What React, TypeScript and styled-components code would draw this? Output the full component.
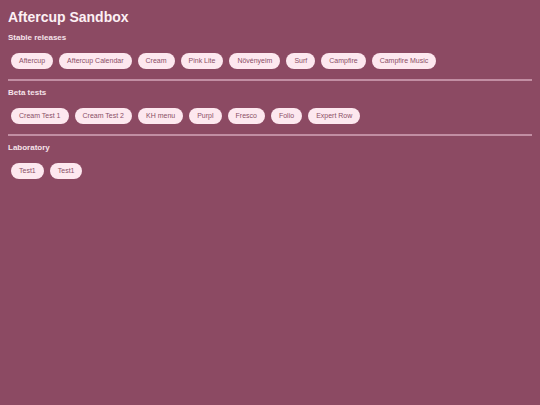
import React from "react";
import styled, { createGlobalStyle } from "styled-components";

const GlobalStyle = createGlobalStyle`
  html, body {
    margin: 0;
    padding: 0;
    background: #8c4a63;
  }
  body {
    font-family: "Liberation Sans", Arial, sans-serif;
  }
`;

const sections = [
  {
    title: "Stable releases",
    items: [
      "Aftercup",
      "Aftercup Calendar",
      "Cream",
      "Pink Lite",
      "Növényeim",
      "Surf",
      "Campfire",
      "Campfire Music",
    ],
  },
  {
    title: "Beta tests",
    items: ["Cream Test 1", "Cream Test 2", "KH menu", "Purpl", "Fresco", "Folio", "Expert Row"],
  },
  {
    title: "Laboratory",
    items: ["Test1", "Test1"],
  },
];

export default function App() {
  return (
    <>
      <GlobalStyle />
      <Page>
        <Title>Aftercup Sandbox</Title>
        {sections.map((section, idx) => (
          <React.Fragment key={section.title}>
            <Section>
              <Heading>{section.title}</Heading>
              <ButtonRow>
                {section.items.map((item, i) => (
                  <AppButton key={i}>{item}</AppButton>
                ))}
              </ButtonRow>
            </Section>
            {idx < sections.length - 1 && <Divider />}
          </React.Fragment>
        ))}
      </Page>
    </>
  );
}

const Page = styled.div`
  width: 540px;
  height: 405px;
  box-sizing: border-box;
  padding: 8px 8px;
  background: #8c4a63;
  color: #fbe9ef;
`;

const Title = styled.h1`
  margin: 1px 0 0 0;
  font-size: 14px;
  line-height: 17px;
  font-weight: bold;
  color: #fdf0f4;
`;

const Section = styled.div`
  display: flex;
  flex-direction: column;
`;

const Heading = styled.h2`
  margin: 7px 0 0 0;
  font-size: 8px;
  line-height: 10px;
  font-weight: bold;
  color: #f6e3ea;
`;

const ButtonRow = styled.div`
  display: flex;
  flex-wrap: wrap;
  gap: 6px;
  padding: 0 3px;
  margin-top: 10px;
`;

const AppButton = styled.button`
  height: 16px;
  padding: 0 8px;
  border: none;
  border-radius: 8px;
  background: #fde8ef;
  color: #8a4f66;
  font-family: "Liberation Sans", Arial, sans-serif;
  font-size: 7px;
  line-height: 16px;
  cursor: pointer;
`;

const Divider = styled.hr`
  margin: 10px 0 0 0;
  border: none;
  height: 2px;
  background: #c28ea3;
`;
